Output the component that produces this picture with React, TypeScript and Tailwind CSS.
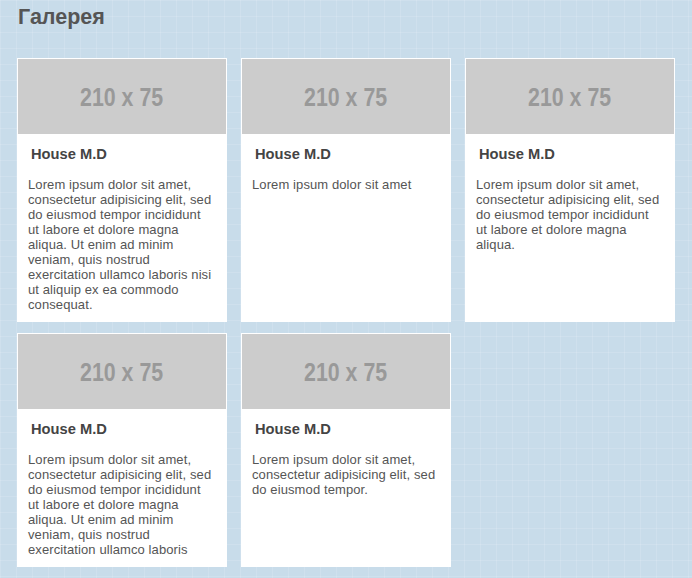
const items = [
  {
    title: "House M.D",
    text: "Lorem ipsum dolor sit amet, consectetur adipisicing elit, sed do eiusmod tempor incididunt ut labore et dolore magna aliqua. Ut enim ad minim veniam, quis nostrud exercitation ullamco laboris nisi ut aliquip ex ea commodo consequat.",
  },
  { title: "House M.D", text: "Lorem ipsum dolor sit amet" },
  {
    title: "House M.D",
    text: "Lorem ipsum dolor sit amet, consectetur adipisicing elit, sed do eiusmod tempor incididunt ut labore et dolore magna aliqua.",
  },
  {
    title: "House M.D",
    text: "Lorem ipsum dolor sit amet, consectetur adipisicing elit, sed do eiusmod tempor incididunt ut labore et dolore magna aliqua. Ut enim ad minim veniam, quis nostrud exercitation ullamco laboris",
  },
  {
    title: "House M.D",
    text: "Lorem ipsum dolor sit amet, consectetur adipisicing elit, sed do eiusmod tempor.",
  },
];

function Card({ title, text }: { title: string; text: string }) {
  return (
    <div className="border border-white bg-white">
      <div className="flex h-[75px] items-center justify-center bg-[#cccccc]">
        <span className="inline-block scale-x-[0.82] text-[26px] font-bold leading-none text-[#999999]">
          210 x 75
        </span>
      </div>
      <div className="pb-[9px] pl-[10px] pr-[13px] pt-[12px]">
        <h3 className="pl-[3px] text-[14.7px] font-bold leading-[17px] text-[#444444]">{title}</h3>
        <p className="mt-[14px] text-[13px] leading-[15px] tracking-[0.1px] text-[#555555]">{text}</p>
      </div>
    </div>
  );
}

export default function App() {
  return (
    <div className="min-h-screen bg-[#c8dcea] bg-[linear-gradient(to_right,rgba(255,255,255,0.12)_1px,transparent_1px),linear-gradient(to_bottom,rgba(255,255,255,0.12)_1px,transparent_1px)] bg-[size:16px_16px] pl-[17px] pt-[5px] font-['Liberation_Sans',Arial,sans-serif]">
      <h2 className="pl-[1px] text-[21.5px] font-bold leading-6 text-[#555555]">Галерея</h2>
      <div className="mt-[29px] grid grid-cols-[repeat(3,210px)] gap-x-[14px] gap-y-[11px] pb-[12px]">
        {items.map((item, i) => (
          <Card key={i} title={item.title} text={item.text} />
        ))}
      </div>
    </div>
  );
}
